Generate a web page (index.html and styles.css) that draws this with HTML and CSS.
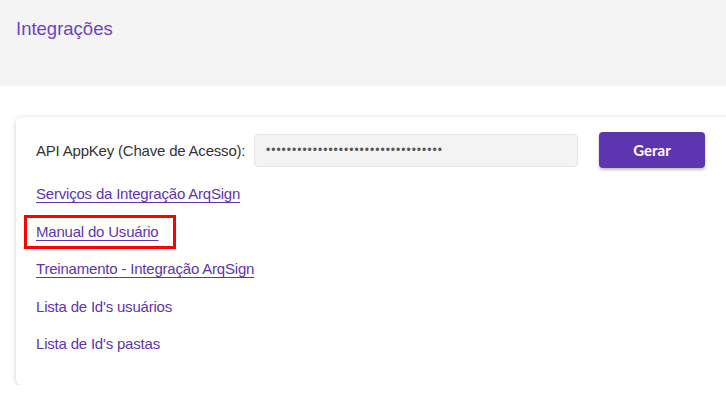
FILE: index.html
```html
<!DOCTYPE html>
<html lang="pt-BR">
<head>
<meta charset="utf-8">
<title>Integrações</title>
<link rel="stylesheet" href="styles.css">
</head>
<body>
  <header class="page-header">
    <h1 class="page-title">Integrações</h1>
  </header>
  <main class="content">
    <section class="card">
      <div class="key-row">
        <label class="key-label" for="appkey">API AppKey (Chave de Acesso):</label>
        <input class="key-input" id="appkey" type="password" value="abcdefghijklmnopqrstuvwxyz01234567" readonly>
        <button class="btn-primary" type="button">Gerar</button>
      </div>
      <ul class="link-list">
        <li><a class="link" href="#">Serviços da Integração ArqSign</a></li>
        <li><span class="highlight"><a class="link" href="#">Manual do Usuário</a></span></li>
        <li><a class="link" href="#">Treinamento - Integração ArqSign</a></li>
        <li><a class="link plain" href="#">Lista de Id's usuários</a></li>
        <li><a class="link plain" href="#">Lista de Id's pastas</a></li>
      </ul>
    </section>
  </main>
</body>
</html>
```

FILE: styles.css
```css
html, body {
  margin: 0;
  padding: 0;
  background: #ffffff;
  overflow: hidden;
}
body {
  font-family: "Liberation Sans", Arial, sans-serif;
  color: #333333;
  width: 726px;
}
.page-header {
  height: 86px;
  background: #f4f4f4;
  padding: 18px 16px 0;
  box-sizing: border-box;
}
.page-title {
  margin: 0;
  font-size: 18.5px;
  font-weight: normal;
  line-height: 22px;
  color: #6a45c2;
}
.content {
  padding: 31px 0 0 16px;
}
.card {
  width: 740px;
  background: #ffffff;
  border-radius: 6px;
  box-shadow: 0 1px 5px rgba(0, 0, 0, 0.18);
  padding: 15px 20px 31px 20px;
  box-sizing: border-box;
}
.key-row {
  display: flex;
  align-items: center;
  height: 36px;
}
.key-label {
  font-size: 15px;
  letter-spacing: -0.2px;
  color: #333333;
  width: 218px;
  white-space: nowrap;
}
.key-input {
  width: 324px;
  height: 33px;
  box-sizing: border-box;
  border: 1px solid #e6e6e6;
  border-radius: 4px;
  background: #f3f3f3;
  padding: 0 11px;
  font-size: 12px;
  color: #555555;
  letter-spacing: 1px;
  outline: none;
}
.btn-primary {
  margin-left: 21px;
  width: 106px;
  height: 36px;
  border: 0;
  border-radius: 4px;
  background: #5e35b1;
  color: #ffffff;
  font-family: Lato, "Liberation Sans", sans-serif;
  font-weight: bold;
  font-size: 15px;
  box-shadow: 0 2px 3px rgba(0, 0, 0, 0.25);
}
.link-list {
  list-style: none;
  margin: 16px 0 0;
  padding: 0;
  display: flex;
  flex-direction: column;
  gap: 17.5px;
}
.link-list li {
  height: 20px;
  display: flex;
  align-items: center;
}
.link {
  font-size: 15px;
  letter-spacing: -0.2px;
  line-height: 20px;
  color: #5e35b1;
  text-decoration: underline;
  text-underline-offset: 3px;
}
.link.plain {
  text-decoration: none;
}
.highlight {
  display: inline-block;
  border: 3px solid #ff0000;
  padding: 4px 14px 4px 9px;
  margin-left: -12px;
}
```
